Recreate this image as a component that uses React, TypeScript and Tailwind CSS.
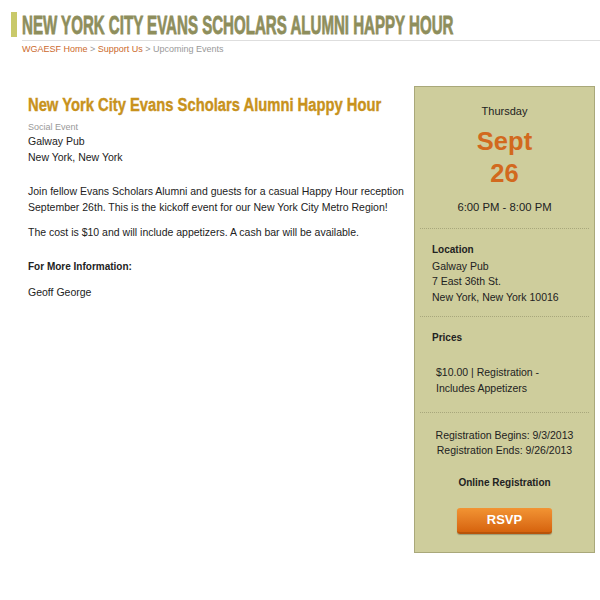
import React from "react";

export default function App() {
  const body = { fontFamily: '"Liberation Sans", Arial, sans-serif' };
  return (
    <div className="w-[600px] h-[600px] bg-white text-[#222] overflow-hidden" style={body}>
      {/* Header */}
      <div className="pt-[12px] pl-[11px] flex items-start">
        <div className="w-[6px] h-[25px] shrink-0 bg-[#c9c96a]" />
        <h1 className="ml-[5px] mt-[-1px] text-[26px] leading-[28px] font-bold text-[#8e8e5c] whitespace-nowrap inline-block origin-left scale-x-[0.58] [-webkit-text-stroke:0.8px_#8e8e5c]">
          NEW YORK CITY EVANS SCHOLARS ALUMNI HAPPY HOUR
        </h1>
      </div>
      <div className="ml-[22px] mt-[1px] border-t border-[#dedede]" />
      <div className="ml-[22px] mt-[2px] text-[9px] leading-[12px] text-[#999]">
        <span className="text-[#cc6a2c]">WGAESF Home</span> &gt;{" "}
        <span className="text-[#cc6a2c]">Support Us</span> &gt; Upcoming Events
      </div>

      <div className="flex mt-[31px]">
        {/* Main column */}
        <div className="w-[414px] pl-[28px] pt-[8px]">
          <h2 className="text-[18px] leading-[22px] font-bold text-[#c8921c] whitespace-nowrap inline-block origin-left scale-x-[0.82] [-webkit-text-stroke:0.4px_#c8921c]">
            New York City Evans Scholars Alumni Happy Hour
          </h2>
          <div className="mt-[3px] text-[9px] leading-[12px] text-[#999]">Social Event</div>
          <div className="text-[10.5px] leading-[16px]">Galway Pub</div>
          <div className="text-[10.5px] leading-[16px]">New York, New York</div>
          <p className="mt-[18px] text-[10.5px] leading-[16px] whitespace-nowrap">
            Join fellow Evans Scholars Alumni and guests for a casual Happy Hour reception
            <br />
            September 26th. This is the kickoff event for our New York City Metro Region!
          </p>
          <p className="mt-[9px] text-[10.5px] leading-[16px]">
            The cost is $10 and will include appetizers. A cash bar will be available.
          </p>
          <p className="mt-[19px] text-[10px] leading-[16px] font-bold">For More Information:</p>
          <p className="mt-[9px] text-[10.5px] leading-[16px]">Geoff George</p>
        </div>

        {/* Side panel */}
        <div className="w-[181px] h-[467px] shrink-0 bg-[#cecd9c] border border-[#a9a87a] text-[10.5px] leading-[16px] px-[5px]">
          <div className="pt-[16px] text-center text-[11px]">Thursday</div>
          <div className="mt-[6px] text-center text-[25.5px] leading-[32px] font-bold text-[#d2691e]">
            Sept
            <br />
            26
          </div>
          <div className="mt-[10px] text-center text-[11.3px]">6:00 PM - 8:00 PM</div>
          <div className="mt-[13px] border-t border-dotted border-[#a8a77c]" />
          <div className="pl-[12px] pt-[13px]">
            <div className="font-bold text-[10px]">Location</div>
            <div>Galway Pub</div>
            <div className="leading-[15px]">7 East 36th St.</div>
            <div>New York, New York 10016</div>
          </div>
          <div className="mt-[11px] border-t border-dotted border-[#a8a77c]" />
          <div className="pl-[12px] pt-[13px] font-bold text-[10px]">Prices</div>
          <div className="pl-[16px] pt-[18px]">
            $10.00 | Registration -
            <br />
            Includes Appetizers
          </div>
          <div className="mt-[16px] border-t border-dotted border-[#a8a77c]" />
          <div className="pt-[15px] text-center leading-[15px]">
            Registration Begins: 9/3/2013
            <br />
            Registration Ends: 9/26/2013
          </div>
          <div className="mt-[17px] text-center font-bold text-[10px]">Online Registration</div>
          <div className="mt-[17px] flex justify-center">
            <button className="w-[95px] h-[26px] rounded-[3px] bg-gradient-to-b from-[#f29433] to-[#d6630c] border-b-2 border-[#b85409] text-white font-bold text-[13px] leading-[24px] shadow-[0_1px_1px_rgba(0,0,0,0.25)]">
              RSVP
            </button>
          </div>
        </div>
      </div>
    </div>
  );
}
